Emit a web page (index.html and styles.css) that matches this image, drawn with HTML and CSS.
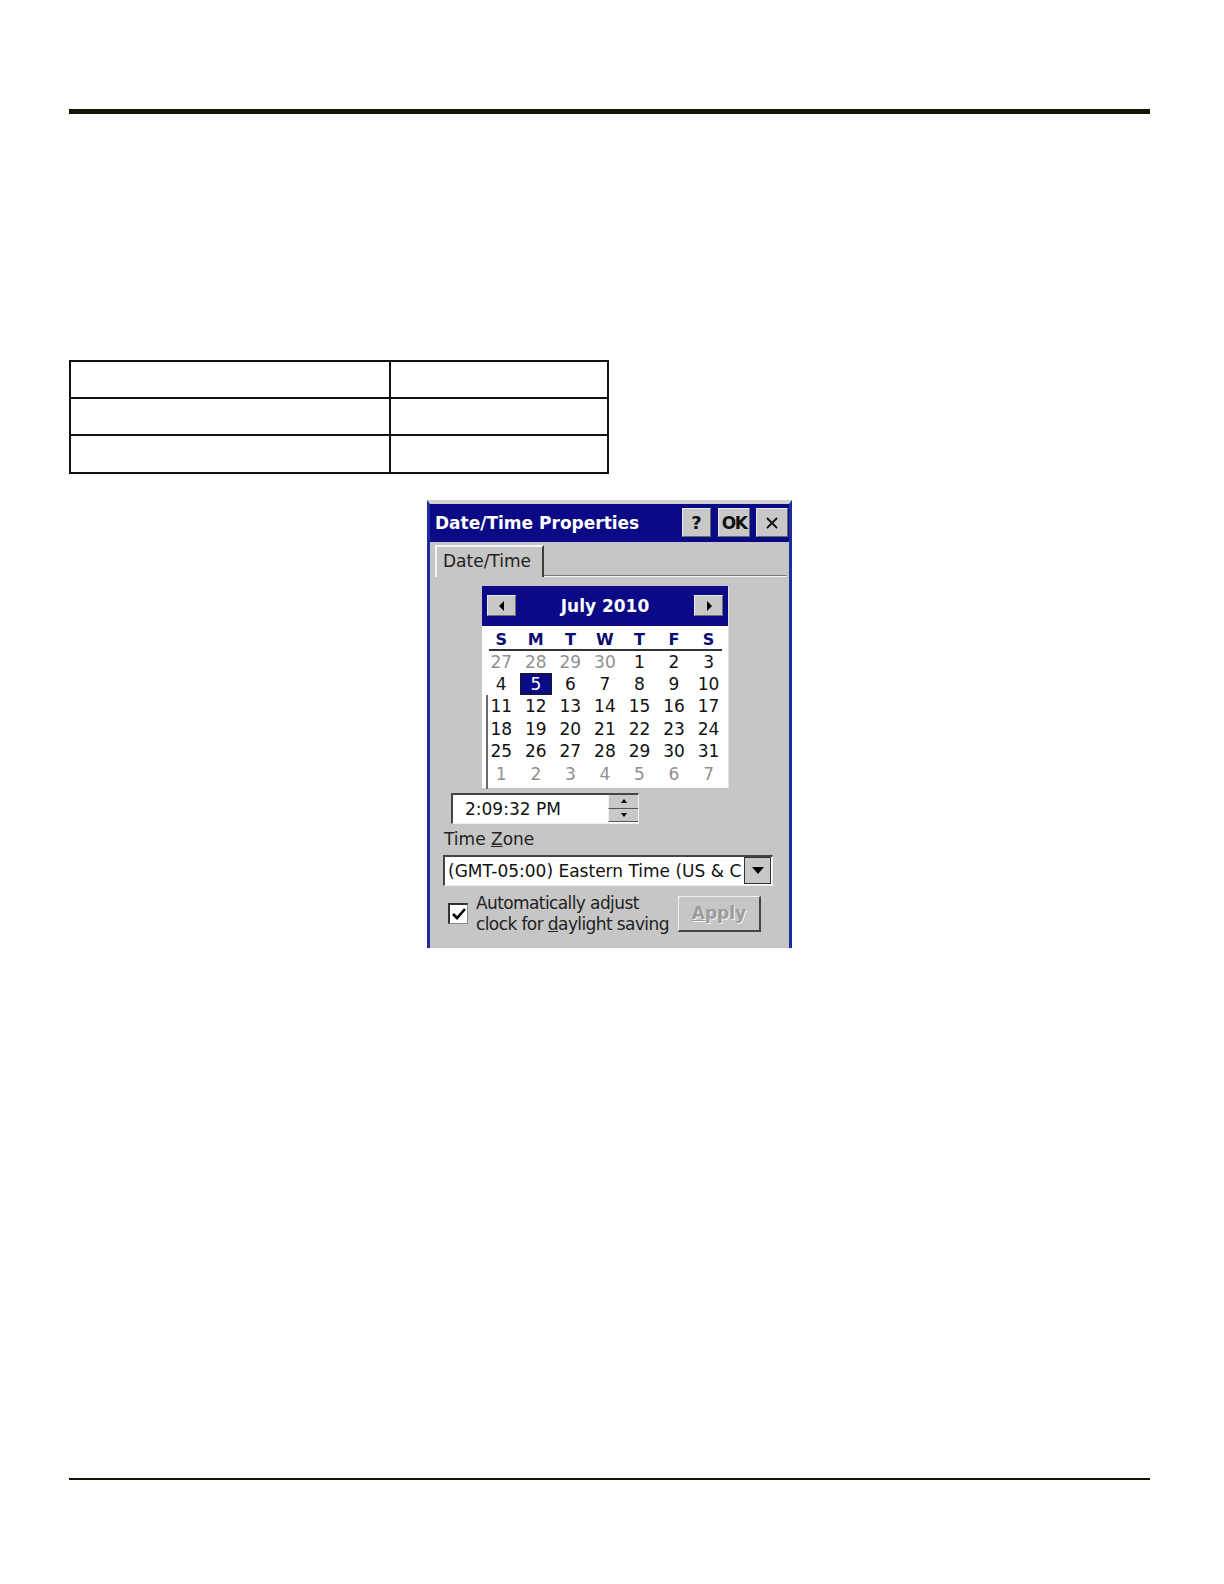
FILE: index.html
```html
<!DOCTYPE html>
<html>
<head>
<meta charset="utf-8">
<link rel="stylesheet" href="styles.css">
</head>
<body>
<div class="page">
  <div class="rule-top"></div>
  <table class="grid">
    <tr><td class="c1"></td><td class="c2"></td></tr>
    <tr><td class="c1"></td><td class="c2"></td></tr>
    <tr><td class="c1"></td><td class="c2"></td></tr>
  </table>
  <div class="figure">
    <div class="dialog">
      <div class="titlebar">
        <span class="title">Date/Time Properties</span>
        <div class="tbuttons">
          <span class="tbtn q">?</span>
          <span class="tbtn ok">OK</span>
          <span class="tbtn x">
            <svg width="14" height="14" viewBox="0 0 14 14"><path d="M2 2L12 12M12 2L2 12" stroke="#111" stroke-width="1.8"/></svg>
          </span>
        </div>
      </div>
      <div class="tabstrip">
        <div class="tab">Date/Time</div>
        <div class="tabfill"></div>
      </div>
      <div class="content">
        <div class="calendar">
          <div class="calhead">
            <span class="arrow"><svg width="8" height="10" viewBox="0 0 8 10"><path d="M6 0L1 5L6 10Z" fill="#000"/></svg></span>
            <span class="month">July 2010</span>
            <span class="arrow"><svg width="8" height="10" viewBox="0 0 8 10"><path d="M2 0L7 5L2 10Z" fill="#000"/></svg></span>
          </div>
          <div class="dow">
            <span>S</span><span>M</span><span>T</span><span>W</span><span>T</span><span>F</span><span>S</span>
          </div>
          <div class="days">
            <span class="dim">27</span><span class="dim">28</span><span class="dim">29</span><span class="dim">30</span><span>1</span><span>2</span><span>3</span>
            <span>4</span><span class="sel">5</span><span>6</span><span>7</span><span>8</span><span>9</span><span>10</span>
            <span>11</span><span>12</span><span>13</span><span>14</span><span>15</span><span>16</span><span>17</span>
            <span>18</span><span>19</span><span>20</span><span>21</span><span>22</span><span>23</span><span>24</span>
            <span>25</span><span>26</span><span>27</span><span>28</span><span>29</span><span>30</span><span>31</span>
            <span class="dim">1</span><span class="dim">2</span><span class="dim">3</span><span class="dim">4</span><span class="dim">5</span><span class="dim">6</span><span class="dim">7</span>
          </div>
        </div>
        <div class="timefield">
          <span class="timetext">2:09:32 PM</span>
          <span class="spin">
            <span class="spinbtn"><svg width="6" height="4" viewBox="0 0 6 4"><path d="M0 4L3 0L6 4Z" fill="#000"/></svg></span>
            <span class="spinbtn"><svg width="6" height="4" viewBox="0 0 6 4"><path d="M0 0L3 4L6 0Z" fill="#000"/></svg></span>
          </span>
        </div>
        <div class="tzlabel">Time <u>Z</u>one</div>
        <div class="combo">
          <span class="combotext">(GMT-05:00) Eastern Time (US &amp; C</span>
          <span class="dropbtn"><svg width="12" height="7" viewBox="0 0 12 7"><path d="M0 0L12 0L6 7Z" fill="#000"/></svg></span>
        </div>
        <div class="bottomrow">
          <span class="checkbox"><svg width="16" height="14" viewBox="0 0 16 14"><path d="M2 7L6 11L14 2" stroke="#000" stroke-width="2.6" fill="none"/></svg></span>
          <span class="checklabel">Automatically adjust<br>clock for <u>d</u>aylight saving</span>
          <span class="apply"><u>A</u>pply</span>
        </div>
      </div>
    </div>
  </div>
  <div class="rule-bottom"></div>
</div>
</body>
</html>
```
FILE: styles.css
```css
html, body {
  margin: 0;
  padding: 0;
  background: #ffffff;
}
.page {
  width: 1081px;
  padding: 109px 0 0 69px;
}
.rule-top {
  height: 5px;
  background: #141400;
}
.grid {
  margin-top: 246px;
  width: 540px;
  border-collapse: collapse;
  border: 2px solid #111;
}
.grid td {
  height: 35.2px;
  padding: 0;
  border: 2px solid #111;
}
.grid .c1 { width: 318px; }
.figure {
  margin-top: 26px;
  margin-left: 358px;
}
.rule-bottom {
  margin-top: 530px;
  height: 2px;
  background: #141400;
}

.dialog {
  width: 365px;
  height: 448px;
  box-sizing: border-box;
  background: #c6c6c6;
  border-left: 3px solid #1c2c9c;
  border-right: 3px solid #1c2c9c;
  border-top: 4px solid #d2d2d2;
  overflow: hidden;
  font-family: "DejaVu Sans", sans-serif;
  font-size: 17px;
  color: #111;
}
.titlebar {
  height: 38px;
  background: #0a0a86;
  display: flex;
  align-items: center;
  padding: 0 1px 0 5px;
}
.title {
  color: #fff;
  font-weight: bold;
  font-size: 17px;
}
.tbuttons {
  margin-left: auto;
  display: flex;
  gap: 6px;
}
.tbtn {
  height: 29px;
  width: 32px;
  background: #c8c8c8;
  display: flex;
  align-items: center;
  justify-content: center;
  font-weight: bold;
  font-size: 18px;
  color: #111;
  box-sizing: border-box;
  border-top: 1px solid #e8e8e8;
  border-left: 1px solid #e8e8e8;
  border-right: 1px solid #6a6a6a;
  border-bottom: 1px solid #6a6a6a;
}
.tbtn.q { width: 29px; margin-right: 1px; }
.tbtn.ok { letter-spacing: -1.5px; font-size: 17px; }

.tabstrip {
  height: 35px;
  display: flex;
  align-items: flex-end;
}
.tab {
  margin-left: 5px;
  width: 109px;
  height: 32px;
  box-sizing: border-box;
  border-top: 2px solid #f4f4f4;
  border-left: 2px solid #f4f4f4;
  border-right: 2px solid #3c3c3c;
  padding-left: 6px;
  line-height: 28px;
  color: #222;
}
.tabfill {
  flex: 1;
  height: 0;
  border-top: 1px solid #7a7a7a;
  border-bottom: 1px solid #f4f4f4;
  margin-right: 2px;
}

.content {
  padding-top: 9px;
}
.calendar {
  margin-left: 52px;
  width: 247px;
  height: 202px;
  box-sizing: border-box;
  background: #fff;
  border-right: 1px solid #e0e0e0;
}
.calhead {
  height: 40px;
  background: #0a0a86;
  display: flex;
  align-items: center;
  padding: 0 5px;
}
.arrow {
  width: 29px;
  height: 21px;
  box-sizing: border-box;
  background: #c8c8c8;
  border-top: 1px solid #ececec;
  border-left: 1px solid #ececec;
  border-right: 1px solid #707070;
  border-bottom: 1px solid #707070;
  display: flex;
  align-items: center;
  justify-content: center;
}
.month {
  flex: 1;
  text-align: center;
  color: #fff;
  font-weight: bold;
  font-size: 17px;
}
.dow {
  display: grid;
  grid-template-columns: repeat(7, 34.55px);
  margin: 0 0 0 2px;
  height: 24px;
  align-items: end;
  color: #0a0a70;
  font-weight: bold;
  font-size: 16px;
  text-align: center;
  position: relative;
}
.dow span { line-height: 21px; }
.dow::after {
  content: "";
  position: absolute;
  left: 5px;
  right: 6px;
  bottom: -1px;
  height: 2px;
  background: #333;
}
.days {
  display: grid;
  grid-template-columns: repeat(7, 34.55px);
  grid-auto-rows: 22.44px;
  margin: 1px 0 0 0;
  padding-left: 2px;
  text-align: center;
  font-size: 17px;
  line-height: 22px;
  color: #111;
  position: relative;
}
.days::before {
  content: "";
  position: absolute;
  left: 4px;
  top: 44px;
  bottom: -4px;
  width: 2px;
  background: #6a6a6a;
}
.days .dim { color: #909090; }
.days .sel {
  background: #0a0a86;
  color: #fff;
  outline: 2px dotted #1a1a1a;
  outline-offset: -2px;
  margin: 0 1px;
}

.timefield {
  margin: 5px 0 0 21px;
  width: 188px;
  height: 31px;
  box-sizing: border-box;
  background: #fff;
  border-top: 2px solid #444;
  border-left: 2px solid #444;
  border-right: 1px solid #f0f0f0;
  border-bottom: 1px solid #f0f0f0;
  display: flex;
  align-items: center;
}
.timetext {
  padding-left: 12px;
  flex: 1;
}
.spin {
  width: 30px;
  height: 27px;
  display: flex;
  flex-direction: column;
}
.spinbtn {
  flex: 1;
  background: #c8c8c8;
  display: flex;
  align-items: center;
  justify-content: center;
  border-left: 1px solid #eee;
  border-bottom: 1px solid #555;
}
.tzlabel {
  margin-left: 14px;
  height: 31px;
  line-height: 31px;
  color: #222;
}
.combo {
  margin-left: 13px;
  width: 330px;
  height: 31px;
  box-sizing: border-box;
  background: #fff;
  border-top: 2px solid #444;
  border-left: 2px solid #444;
  border-right: 1px solid #eee;
  border-bottom: 1px solid #eee;
  display: flex;
  align-items: center;
}
.combotext {
  flex: 1;
  padding-left: 3px;
  white-space: nowrap;
  overflow: hidden;
}
.dropbtn {
  width: 27px;
  height: 27px;
  box-sizing: border-box;
  background: #c8c8c8;
  border: 1px solid #333;
  display: flex;
  align-items: center;
  justify-content: center;
  margin-right: 1px;
}
.bottomrow {
  margin-top: 10px;
  display: flex;
  align-items: center;
  height: 36px;
}
.checkbox {
  margin-left: 18px;
  width: 20px;
  height: 21px;
  box-sizing: border-box;
  background: #fff;
  border-top: 2px solid #333;
  border-left: 2px solid #333;
  border-right: 1px solid #888;
  border-bottom: 1px solid #888;
  display: flex;
  align-items: center;
  justify-content: center;
}
.checklabel {
  margin-left: 8px;
  width: 202px;
  line-height: 21px;
  color: #222;
  white-space: nowrap;
  letter-spacing: -0.6px;
}
.apply {
  width: 83px;
  height: 36px;
  box-sizing: border-box;
  border-top: 1px solid #f0f0f0;
  border-left: 1px solid #f0f0f0;
  border-right: 2px solid #444;
  border-bottom: 2px solid #444;
  display: flex;
  align-items: center;
  justify-content: center;
  color: #9c9c9c;
  font-weight: bold;
  text-shadow: 1px 1px 0 #f4f4f4;
}
```
